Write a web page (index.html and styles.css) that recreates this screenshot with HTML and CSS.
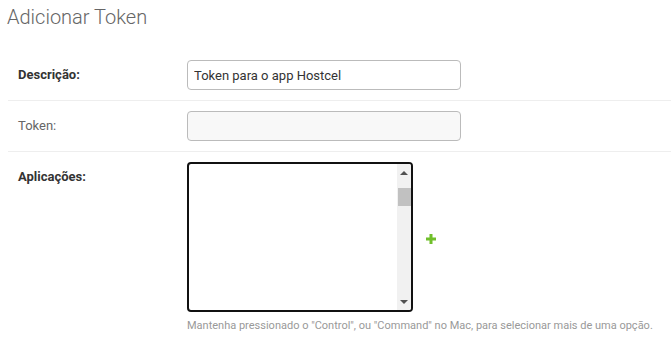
FILE: index.html
```html
<!DOCTYPE html>
<html lang="pt-BR">
<head>
  <meta charset="UTF-8">
  <meta name="viewport" content="width=device-width, initial-scale=1.0">
  <title>Adicionar Token</title>
  <link rel="stylesheet" href="styles.css">
</head>
<body>
  <!-- Title -->
  <h1 class="page-title">Adicionar Token</h1>

  <!-- Form -->
  <form class="token-form">
    <div class="form-row">
      <label class="field-label required" for="descricao">Descrição:</label>
      <input id="descricao" class="text-input" type="text" value="Token para o app Hostcel">
    </div>

    <div class="form-row">
      <label class="field-label" for="token">Token:</label>
      <input id="token" class="text-input readonly" type="text" value="">
    </div>

    <div class="form-row last">
      <label class="field-label required">Aplicações:</label>
      <div class="widget">
        <div class="select-line">
          <div class="multi-select">
            <div class="options"></div>
            <div class="scroll-track">
              <div class="scroll-btn"><span class="arrow-up"></span></div>
              <div class="scroll-thumb"></div>
              <div class="scroll-space"></div>
              <div class="scroll-btn"><span class="arrow-down"></span></div>
            </div>
          </div>
          <a class="add-link" href="#" title="Adicionar outra Aplicação">
            <svg width="10" height="10" viewBox="0 0 10 10">
              <rect x="3.5" y="0" width="3" height="10" fill="#70bf2b"/>
              <rect x="0" y="3.5" width="10" height="3" fill="#70bf2b"/>
            </svg>
          </a>
        </div>
        <p class="help-text">Mantenha pressionado o "Control", ou "Command" no Mac, para selecionar mais de uma opção.</p>
      </div>
    </div>
  </form>
</body>
</html>
```

FILE: styles.css
```css
body {
  font-family: Roboto, 'Liberation Sans', sans-serif;
  margin: 0;
  padding: 0;
  background: #fff;
  color: #333;
  font-size: 13px;
}

/* Title */
.page-title {
  margin: 5px 0 21px 7px;
  font-size: 20px;
  line-height: 24px;
  font-weight: 300;
  color: #666;
}

/* Form rows */
.token-form {
  margin-left: 8px;
}

.form-row {
  display: flex;
  align-items: flex-start;
  padding: 10px;
  border-bottom: 1px solid #eee;
}

.form-row.last {
  border-bottom: none;
}

.field-label {
  width: 169px;
  flex-shrink: 0;
  line-height: 30px;
  color: #666;
}

.field-label.required {
  font-weight: bold;
  color: #333;
}

.text-input {
  box-sizing: border-box;
  width: 274px;
  height: 30px;
  padding: 0 6px;
  border: 1px solid #bbb;
  border-radius: 4px;
  font-family: Roboto, 'Liberation Sans', sans-serif;
  font-size: 13px;
  color: #333;
  background: #fff;
  outline: none;
}

.text-input.readonly {
  background: #f8f8f8;
}

/* Multi select */
.select-line {
  display: flex;
  align-items: center;
}

.multi-select {
  box-sizing: border-box;
  width: 226px;
  height: 150px;
  border: 2px solid #111;
  border-radius: 4px;
  display: flex;
  overflow: hidden;
  background: #fff;
}

.options {
  flex: 1;
}

.scroll-track {
  width: 14px;
  background: #f1f1f1;
  display: flex;
  flex-direction: column;
}

.scroll-btn {
  height: 17px;
  display: flex;
  align-items: center;
  justify-content: center;
}

.arrow-up {
  border-left: 4px solid transparent;
  border-right: 4px solid transparent;
  border-bottom: 4px solid #505050;
}

.arrow-down {
  border-left: 4px solid transparent;
  border-right: 4px solid transparent;
  border-top: 4px solid #505050;
}

.scroll-thumb {
  height: 18px;
  margin: 7px 0 0 1px;
  background: #c1c1c1;
}

.scroll-space {
  flex: 1;
}

.add-link {
  display: flex;
  margin-left: 13px;
  margin-top: 3px;
}

.help-text {
  margin: 7px 0 0;
  font-size: 11px;
  line-height: 14px;
  color: #999;
}
```
